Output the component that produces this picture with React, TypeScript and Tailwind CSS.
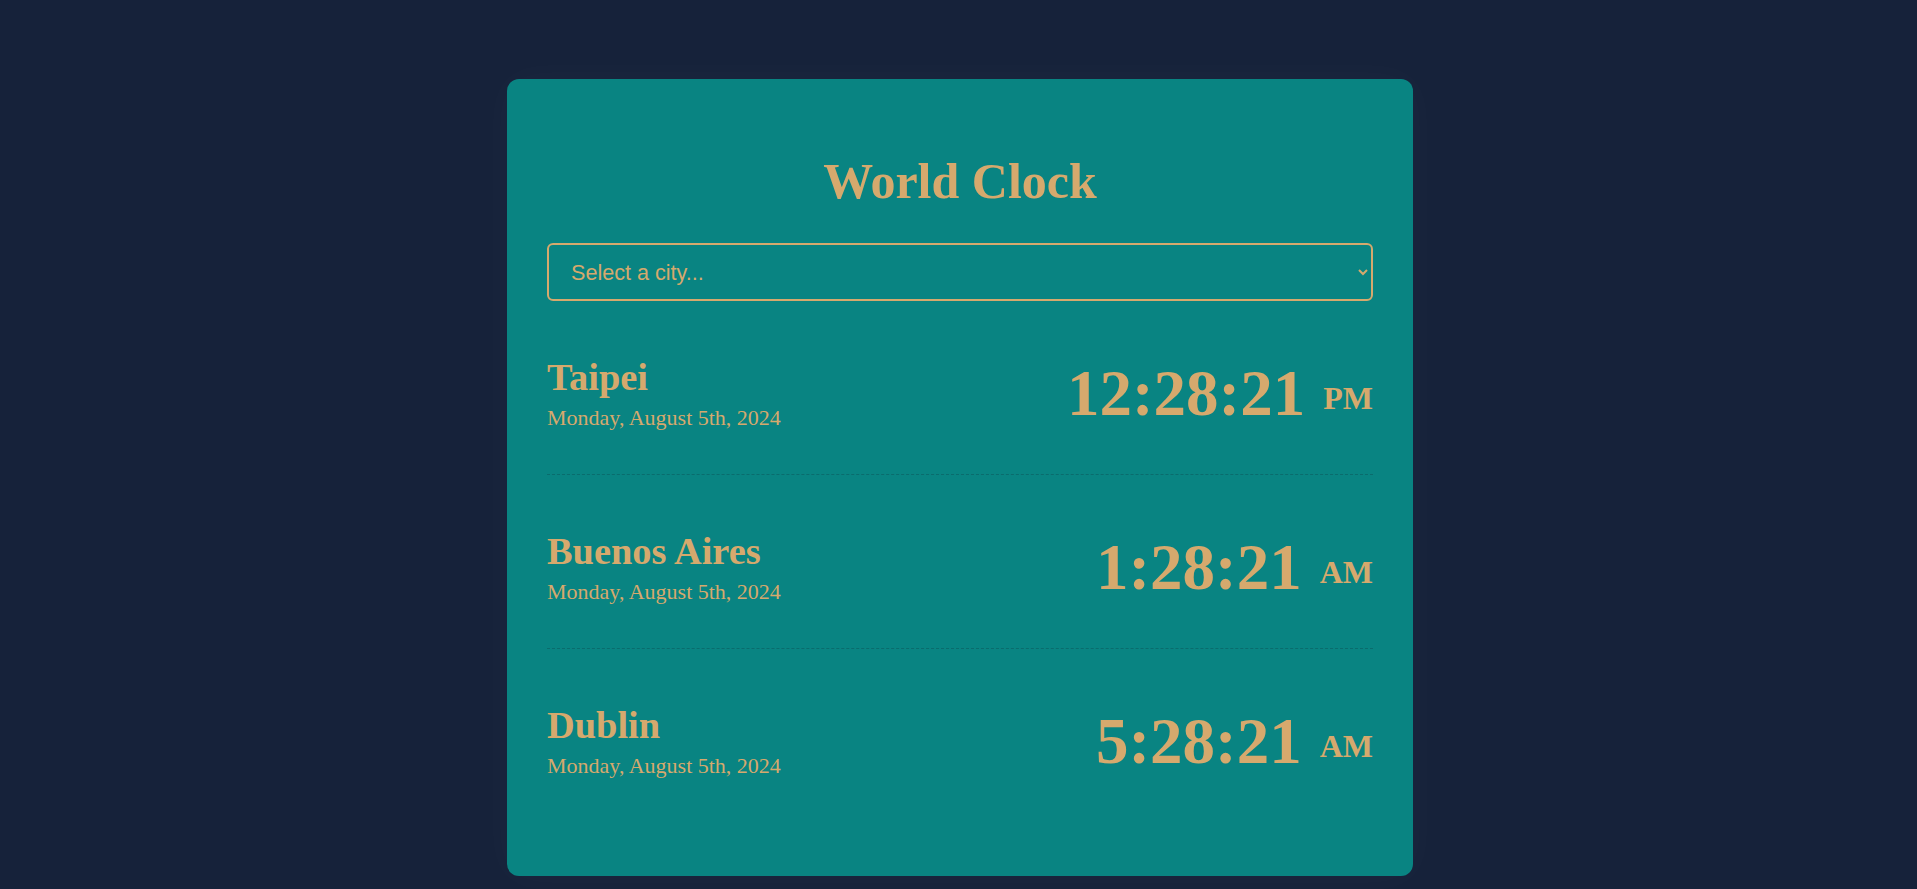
import { useState } from "react";

// World Clock card: title, city picker, list of city times

const CITIES = [
  { name: "Taipei", date: "Monday, August 5th, 2024", time: "12:28:21", period: "PM" },
  { name: "Buenos Aires", date: "Monday, August 5th, 2024", time: "1:28:21", period: "AM" },
  { name: "Dublin", date: "Monday, August 5th, 2024", time: "5:28:21", period: "AM" },
] as const;

const OPTIONS = ["Taipei", "Buenos Aires", "Dublin", "Tokyo", "London", "New York", "Sydney"];

function CityRow({ city }: { city: (typeof CITIES)[number] }) {
  return (
    <div className="mt-3 flex items-center justify-between border-b border-dashed border-[#0a6c6d] py-10 last:border-b-0">
      <div className="flex flex-col">
        <span className="text-[38.4px] font-bold leading-[1.25]">{city.name}</span>
        <span className="mt-px text-[22px] leading-[1.45]">{city.date}</span>
      </div>
      <div className="flex items-baseline">
        <span className="text-[65px] font-bold leading-none">{city.time}</span>
        <span className="ml-[18px] -translate-y-1.5 text-[32px] font-bold leading-none">{city.period}</span>
      </div>
    </div>
  );
}

export default function App() {
  const [selected, setSelected] = useState("");

  return (
    <div className="flex min-h-screen justify-center bg-[#16223a] pt-[79px] pl-[3px]">
      <div
        className="w-[906px] self-start rounded-xl bg-[#098482] px-10 pt-10 pb-[54px] text-[#d6a96d] shadow-[0_0_40px_rgba(255,255,255,0.03)]"
        style={{ fontFamily: "'Liberation Serif', 'Times New Roman', serif" }}
      >
        <h1 className="mt-[37px] mb-[37px] text-center text-[50px] font-bold leading-none">World Clock</h1>

        <select
          value={selected}
          onChange={(e) => setSelected(e.target.value)}
          className="h-[58px] w-full rounded-md border-2 border-[#d6a96d] bg-transparent px-[18px] text-[21.6px] text-[#d6a96d] outline-none"
          style={{ fontFamily: "'Liberation Sans', Arial, sans-serif" }}
        >
          <option value="" disabled>
            Select a city...
          </option>
          {OPTIONS.map((o) => (
            <option key={o} value={o} className="text-black">
              {o}
            </option>
          ))}
        </select>

        <div className="flex flex-col">
          {CITIES.map((c) => (
            <CityRow key={c.name} city={c} />
          ))}
        </div>
      </div>
    </div>
  );
}
